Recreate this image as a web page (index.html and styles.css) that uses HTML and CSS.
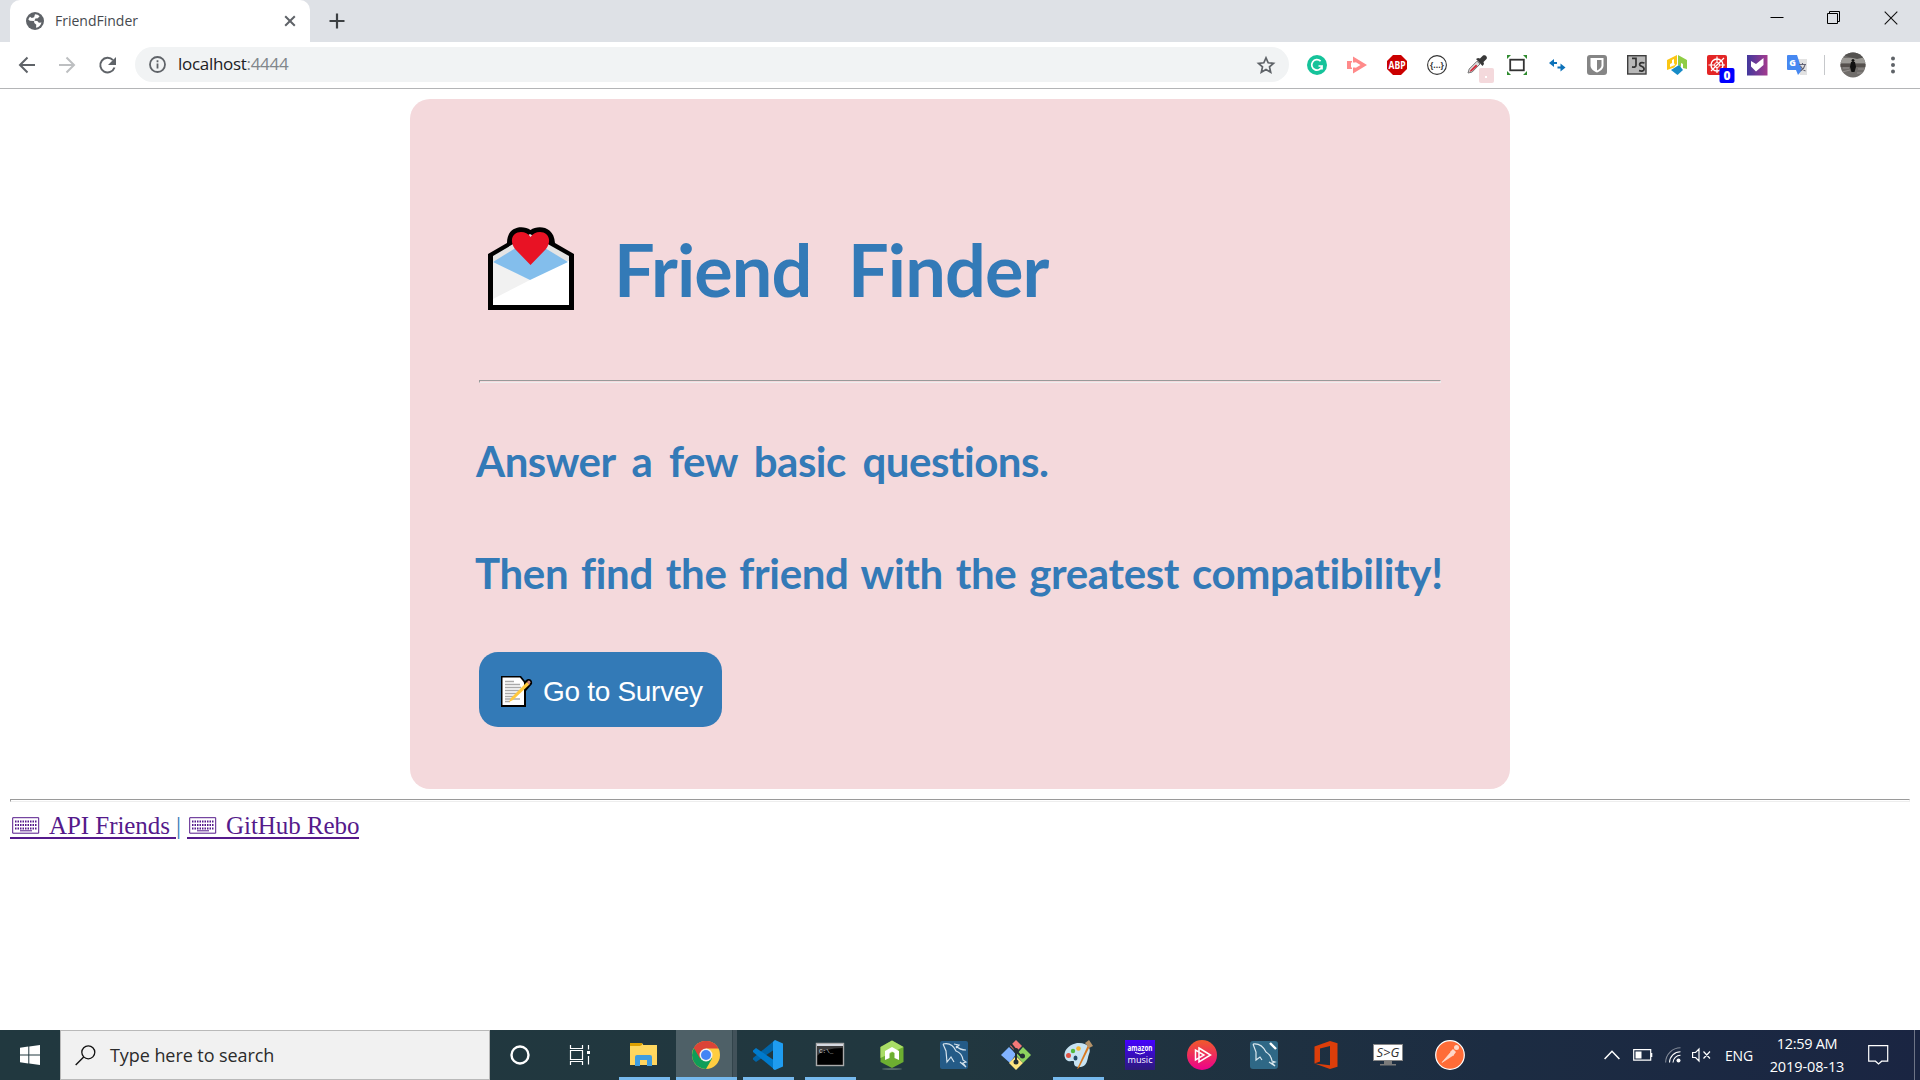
FILE: index.html
```html
<!DOCTYPE html>
<html lang="en">
<head>
<meta charset="utf-8">
<title>FriendFinder</title>
<link rel="stylesheet" href="styles.css">
</head>
<body>
<header class="tabstrip">
  <div class="tab">
    <svg width="18" height="18" viewBox="0 0 18 18"><circle cx="9" cy="9" r="9" fill="#5f6368"/><path d="M9 2.200c2 .1 3.500.8 4.600 2.100l-1.800 1.900-2.400.3-1 2.300 2.900.2 1.600 1.700 2.600-.3c-.5 2.600-2.700 4.900-5.500 5.300l.3-2.900-2-1.800-.2-1.900-4.300-.3-1.500-1.400c.5-1 1-2 1.700-2.700l1.800 1.300 2.300-.8z" fill="#fff"/></svg>
    <span class="tab-title">FriendFinder</span>
    <svg class="tab-close" width="12" height="12" viewBox="0 0 12 12"><path d="M1.200 1.200l9.600 9.600M10.800 1.200l-9.600 9.600" stroke="#5f6368" stroke-width="2"/></svg>
  </div>
  <svg class="new-tab" width="16" height="16" viewBox="0 0 16 16"><path d="M8 .5v15M.5 8h15" stroke="#3c4043" stroke-width="2.200"/></svg>
  <div class="win-controls">
    <svg width="14" height="14" viewBox="0 0 14 14"><path d="M.5 6.500h13" stroke="#000"/></svg>
    <svg width="14" height="14" viewBox="0 0 14 14"><path d="M.5 2.500h10v10h-10zM2.500 2.500v-2h10v10h-2" fill="none" stroke="#000"/></svg>
    <svg width="14" height="14" viewBox="0 0 14 14"><path d="M.7.7l12.600 12.600M13.300.7L.7 13.300" stroke="#111" stroke-width="1.100"/></svg>
  </div>
</header>

<nav class="toolbar">
  <svg class="nav-icon" width="40" height="40" viewBox="0 0 40 40"><path d="M28 20H14M20.500 12.500L13 20l7.500 7.500" fill="none" stroke="#5f6368" stroke-width="2"/></svg>
  <svg class="nav-icon" width="40" height="40" viewBox="0 0 40 40"><path d="M12 20h14M19.500 12.500L27 20l-7.500 7.500" fill="none" stroke="#bdbfc1" stroke-width="2"/></svg>
  <svg class="nav-icon" width="40" height="40" viewBox="0 0 40 40"><path d="M26 15.200A7.300 7.300 0 1 0 27.500 22.500" fill="none" stroke="#5f6368" stroke-width="2"/><path d="M29 12v8h-8z" fill="#5f6368"/></svg>
  <div class="omnibox">
    <svg width="17" height="17" viewBox="0 0 17 17"><circle cx="8.500" cy="8.500" r="7.500" fill="none" stroke="#5f6368" stroke-width="1.800"/><path d="M8.500 7.500v5M8.500 4.300v1.900" stroke="#5f6368" stroke-width="1.800"/></svg>
    <span class="url">localhost<span class="port">:4444</span></span>
    <svg class="star" width="20" height="20" viewBox="0 0 20 20"><path d="M10 2.800l2.200 5 5.300.5-4 3.600 1.200 5.300-4.700-2.800-4.700 2.800 1.200-5.300-4-3.600 5.300-.5z" fill="none" stroke="#5f6368" stroke-width="1.700"/></svg>
  </div>
  <div class="extensions">
    <svg viewBox="0 0 20 20"><circle cx="10" cy="10" r="10" fill="#15c39a"/><path d="M13.600 6.200A5.200 5.200 0 1 0 15 11h-3.500M15 11v3.500" fill="none" stroke="#fff" stroke-width="1.700"/></svg>
    <svg viewBox="0 0 20 20"><path d="M0 6h5v8H0zM6 1.500L20 10 6 18.500z" fill="#ff8a8a"/><path d="M8.500 7l5 3-5 3zM4 7.500h5v5H4z" fill="#fff"/></svg>
    <svg viewBox="0 0 20 20"><path d="M6 0h8l6 6v8l-6 6H6l-6-6V6z" fill="#cb0000"/><text x="1.500" y="13.800" textLength="17" lengthAdjust="spacingAndGlyphs" font-family="Open Sans" font-weight="700" font-size="10.500" fill="#fff">ABP</text></svg>
    <svg viewBox="0 0 20 20"><circle cx="10" cy="10" r="9.400" fill="#fff" stroke="#333" stroke-width="1.100"/><text x="10" y="13" text-anchor="middle" font-family="Open Sans" font-weight="700" font-size="8.500" fill="#333">{...}</text></svg>
    <svg viewBox="0 0 20 20"><path d="M1 18l1.200-4L10 6.200 13 9l-7.800 8z" fill="#ddd" stroke="#777"/><path d="M2.500 17l1-2L9 9.500l1.500 1.500L5 16z" fill="#d22c3c"/><path d="M9 4l2-1 2 .5L16 .5c2-1.300 5 1.200 3.500 3.500L16.500 7l.5 2-1.500 2z" fill="#383838"/><rect x="12" y="13" width="15" height="15" rx="2" fill="#f4d9dc"/><rect x="18" y="21" width="2" height="2" fill="#fff"/></svg>
    <svg viewBox="0 0 20 20"><rect x="3.200" y="4.700" width="13.600" height="10.600" fill="#fff" stroke="#333" stroke-width="1.800"/><path d="M0 0h4L0 4zM16 0h4v4zM0 16v4h4zM20 16v4h-4z" fill="#2f8b2f"/></svg>
    <svg viewBox="0 0 20 20"><path d="M2 8l5-4v3h3v2H7v3zM18.500 12.500l-5-4v3h-3v2h3v3z" fill="#0d72b9"/></svg>
    <svg viewBox="0 0 20 20"><rect width="20" height="20" rx="3" fill="#858585"/><path d="M3.500 3h13v7.500c0 3.500-3 5.500-6.500 7-3.500-1.500-6.500-3.500-6.500-7z" fill="#fff"/><path d="M10 5h4.500v5.500c0 2.200-2 3.800-4.500 5z" fill="#858585"/></svg>
    <svg viewBox="0 0 20 20"><rect x=".7" y=".7" width="18.300" height="18.300" fill="#b8b8b8" stroke="#3e3e3e" stroke-width="1.400"/><path d="M5 3.300h4v7q0 2.400-4 1.500M17.500 8c-5-1.600-6.500 2-3 3.300s4 6-2.500 4.400" fill="none" stroke="#333" stroke-width="1.700"/></svg>
    <svg viewBox="0 0 20 20"><path d="M0 5l10-5v9l-3 3.500L0 15z" fill="#fbc614"/><path d="M11 0l9 5v9l-4-1V9l-2-1v4l-3-2z" fill="#8fcd45"/><path d="M4 15l8-5 4 5-5.500 5z" fill="#168bc7"/><path d="M3 12V9l2-1V5l2-1v4l1 2" fill="#fff"/></svg>
    <svg viewBox="0 0 20 20"><rect width="20" height="20" rx="2" fill="#e32525"/><circle cx="10" cy="10" r="6" fill="none" stroke="#fff" stroke-width="1.400"/><circle cx="10" cy="10" r="2.500" fill="none" stroke="#fff"/><path d="M10 1.500v6M1.500 10h6M17 3L4 16M12 10h6M10 12v6" stroke="#fff" stroke-width="1.200"/><rect x="12.500" y="13" width="15" height="15" rx="2" fill="#00f"/><text x="20" y="25" text-anchor="middle" font-family="Open Sans" font-weight="800" font-size="12" fill="#fff">0</text></svg>
    <svg viewBox="0 0 20 20"><defs><linearGradient id="pv"><stop offset="0" stop-color="#42389d"/><stop offset="1" stop-color="#a33a8e"/></linearGradient></defs><rect width="20.500" height="20.500" fill="url(#pv)"/><path d="M4 6l5 3 7.500-6v7L9 16.500l-5-5z" fill="#fff"/></svg>
    <svg viewBox="0 0 20 20"><path d="M8 4h12v16h-7z" fill="#e2e2e2"/><path d="M1 0h9l5 15H1q-1 0-1-1V1q0-1 1-1zM9 15h6l-4 5z" fill="#4688f1"/><text x="2.300" y="11" font-family="Open Sans" font-weight="800" font-size="9" fill="#fff">G</text><path d="M12 9.500h7M15.500 8v1.500M18 10q-1 4-4.500 6M13.500 11q2 4 5 5" fill="none" stroke="#667" stroke-width="1.100"/></svg>
  </div>
  <div class="divider"></div>
  <svg class="avatar" width="26" height="26" viewBox="0 0 26 26"><defs><clipPath id="av"><circle cx="13" cy="13" r="12.500"/></clipPath></defs><g clip-path="url(#av)"><rect width="26" height="26" fill="#706d6a"/><path d="M0 6h26v5H0z" fill="#9b9995"/><path d="M0 0h26v5L17 7 5 4 0 7z" fill="#545250"/><path d="M0 12h26v3H0z" fill="#55504d"/><path d="M2 20l8-2M17 21h8M3 16h6M18 17h6" stroke="#94908e"/><path d="M11 10h4l1 5-1.500 5h-3L10 15z" fill="#111"/><circle cx="13" cy="8.500" r="1.500" fill="#111"/></g></svg>
  <svg class="menu" width="6" height="18" viewBox="0 0 6 18"><g fill="#5f6368"><circle cx="3" cy="2.500" r="2"/><circle cx="3" cy="9" r="2"/><circle cx="3" cy="15.500" r="2"/></g></svg>
</nav>

<main class="page">
  <section class="card">
    <h1 class="title">
      <svg width="88" height="86" viewBox="0 0 88 86"><path d="M1 28L20 17C20 0 36-1 43.500 4 51-1 67 0 68 17l19 11v56H1z" fill="#000"/><path d="M6 30l37-22 39 22v49H6z" fill="#e4e4e4"/><path d="M6 35h76v44H6z" fill="#fff"/><path d="M6 35v38l37-19z" fill="#f1f1f1"/><path d="M6 36l37-23 38 23-38 18z" fill="#83beec"/><path d="M43.500 39L28 23C21 13 27 6 34 6q6 0 9.500 5Q47 6 53 6c7 0 13 7 6 17z" fill="#e81224"/></svg>
      <span>Friend Finder</span>
    </h1>
    <hr class="rule">
    <h2 class="lead lead-first">Answer a few basic questions.</h2>
    <h2 class="lead lead-second">Then find the friend with the greatest compatibility!</h2>
    <a class="survey-btn">
      <svg width="31" height="32" viewBox="0 0 31 32"><path d="M0 0h20l4 5c4-4 8-1 7 3l-6 7v16H0z" fill="#000"/><path d="M1.500 1.500h17.500l4 5v22.500H1.500z" fill="#fff"/><path d="M4 5.500h9M4 8.500h15M4 11.500h16M4 14.500h14M4 17.500h13M4 20.500h10M4 23h15M4 25.500h5" stroke="#aaa" stroke-width="1.300"/><path d="M8 26l2-4L26 6l2.500 2.500L12 24z" fill="#ffc83d"/><path d="M26 6l1.500-1.500q2 0 2 2L28 9z" fill="#d08b83"/></svg>
      <span>Go to Survey</span>
    </a>
  </section>
  <hr class="rule">
  <footer class="links">
    <a><svg width="28" height="17" viewBox="0 0 28 17"><path d="M.7.700h26v15.500H.7z" fill="none" stroke="#551a8b"/><path d="M3 4.500h22M3 8h22M3 11.500h22" stroke="#551a8b" stroke-width="2" stroke-dasharray="1.500 1"/><path d="M8 13.800h12" stroke="#551a8b"/></svg><span>API Friends </span></a><span class="bar">|</span><a><svg width="28" height="17" viewBox="0 0 28 17"><path d="M.7.700h26v15.500H.7z" fill="none" stroke="#551a8b"/><path d="M3 4.500h22M3 8h22M3 11.500h22" stroke="#551a8b" stroke-width="2" stroke-dasharray="1.500 1"/><path d="M8 13.800h12" stroke="#551a8b"/></svg><span>GitHub Rebo</span></a>
  </footer>
</main>

<footer class="taskbar">
  <div class="start"><svg width="20" height="20" viewBox="0 0 20 20"><path d="M0 2.800L8.300 1.500v8H0zM9.300 1.400L20 0v9.500H9.300zM0 10.500h8.300v8L0 17.300zM9.300 10.500H20V20L9.300 18.600z" fill="#fff"/></svg></div>
  <div class="search">
    <svg width="21" height="21" viewBox="0 0 21 21"><circle cx="13.300" cy="7.300" r="6.500" fill="none" stroke="#111" stroke-width="1.300"/><path d="M8.700 12L.7 20" stroke="#111" stroke-width="1.400"/></svg>
    <span>Type here to search</span>
  </div>
  <div class="sys"><svg viewBox="0 0 30 30"><circle cx="15" cy="15" r="8.500" fill="none" stroke="#fff" stroke-width="2.400"/></svg></div>
  <div class="sys"><svg viewBox="0 0 30 30"><path d="M5.500 5v3.500h12V5M5.500 25v-3.500h12V25M5.500 10.500h12v9h-12zM23.500 5v4.500M23.500 16v8.500" fill="none" stroke="#fff" stroke-width="1.200"/><rect x="22" y="11" width="3" height="3" fill="#fff"/></svg></div>
  <div class="apps">
    <div class="app open"><svg viewBox="0 0 30 30"><path d="M1 3h12l2 3h13v19H1z" fill="#ffd55e"/><path d="M1 3h12v3H1z" fill="#dda000"/><path d="M1 6h10l2-1h15v9H1z" fill="#ffd75f"/><path d="M6 26v-9q0-2 2-2h13q2 0 2 2v9h-5v-6h-7v6z" fill="#3f9de0"/></svg></div>
    <div class="app open active"><svg viewBox="0 0 30 30"><circle cx="15" cy="15" r="14" fill="#ffcd40"/><path d="M15 15L2.900 8A14 14 0 0 1 27.100 8H15z" fill="#db4437"/><path d="M2.900 8A14 14 0 0 0 15 29l6-10.500L15 15z" fill="#0f9d58"/><path d="M2.900 8l6 10.500L15 8.500H27.400A14 14 0 0 0 2.900 8z" fill="#db4437"/><circle cx="15" cy="15" r="6.500" fill="#f1f1f1"/><circle cx="15" cy="15" r="5" fill="#4285f4"/></svg></div>
    <div class="app open"><svg viewBox="0 0 30 30"><path d="M22 0v9L3 22 0 19.500V18z" fill="#0065a9"/><path d="M22 30v-9L3 8 0 10.500V12z" fill="#007acc"/><path d="M22 0l8 3.500v23L22 30l-2-1V2z" fill="#1f9cf0"/></svg></div>
    <div class="app open"><svg viewBox="0 0 30 30"><rect x="1.500" y="3.500" width="27" height="22" fill="#000" stroke="#aaa" stroke-width="1.400"/><path d="M2 4h26v2H2z" fill="#d5d9e0"/><path d="M2 6h26v2Q9 8 2 16z" fill="#3b3b3b"/><text x="4" y="12.500" font-family="Liberation Mono" font-size="6" fill="#ddd">C:\_</text></svg></div>
    <div class="app"><svg viewBox="0 0 30 30"><ellipse cx="15" cy="29" rx="10" ry="1" fill="#546969"/><path d="M15 .5L26.500 7v15L15 28 3.500 22V7z" fill="#6daf31"/><path d="M15 .5L26.500 7 3.500 18V7z" fill="#aadd67"/><path d="M8 20v-9l7-4 7 4v9l-4.500-2v-5L15 11.500 12.500 13v5z" fill="#fff"/></svg></div>
    <div class="app"><svg viewBox="0 0 30 30"><rect x="1" y="1" width="28" height="28" rx="2" fill="#245b87"/><path d="M4 4q9-2 13 7 6 2 7 9l3 2-3 1 3 4-6-5M4 4l3 7 1 11 4-5 3 5M15 4l5 1-3 3M17 6q4 4 10 4" fill="none" stroke="#d5e3ec" stroke-width="1.200"/></svg></div>
    <div class="app"><svg viewBox="0 0 30 30"><path d="M15 0l6 6-6 6-6-6z" fill="#f57878"/><path d="M8 7l7 7-6 9-9-8z" fill="#80b3ff"/><path d="M22 7l8 8-8 8-7-8z" fill="#8dd35f"/><path d="M15 16l7 7-7 7-7-7z" fill="#ffe680"/><path d="M10 4l5 6v14M15 11l6 6" fill="none" stroke="#222f35" stroke-width="2"/><g fill="#222f35"><circle cx="15" cy="10.500" r="2.500"/><circle cx="15" cy="22" r="2.500"/><circle cx="21.500" cy="16" r="2.500"/></g></svg></div>
    <div class="app open"><svg viewBox="0 0 30 30"><path d="M14 3C24 2 29 8 26 14c-2 5-1 13-10 13-5 0-5-3-5-5s-3 0-6-1C-1 18 0 6 14 3z" fill="#c7e3f2"/><ellipse cx="12.500" cy="18" rx="2" ry="2.500" fill="#244b68"/><circle cx="5.500" cy="15.500" r="2.500" fill="#e05243"/><circle cx="10" cy="11" r="2.200" fill="#51b93d"/><circle cx="15.500" cy="8.500" r="2.300" fill="#f4b530"/><path d="M14 29L25 5l2 1-11 22z" fill="#d87920"/><path d="M22 3l4-3 4 6-4 2z" fill="#b69369"/></svg></div>
    <div class="app"><svg viewBox="0 0 30 30"><defs><linearGradient id="am" x2="0" y2="1"><stop stop-color="#4500ff"/><stop offset="1" stop-color="#2c1b79"/></linearGradient></defs><rect width="30" height="30" fill="url(#am)"/><g font-family="Open Sans" fill="#fff"><text x="2.500" y="11" font-size="8" font-weight="700" textLength="25" lengthAdjust="spacingAndGlyphs">amazon</text><text x="2.500" y="22.500" font-size="9" textLength="25" lengthAdjust="spacingAndGlyphs">music</text></g><path d="M10 12.500q5 3 10 0" fill="none" stroke="#fff"/></svg></div>
    <div class="app"><svg viewBox="0 0 30 30"><defs><linearGradient id="ps" x2="0" y2="1"><stop stop-color="#f15b2a"/><stop offset="1" stop-color="#ec008c"/></linearGradient></defs><circle cx="15" cy="15" r="15" fill="url(#ps)"/><path d="M12 8l11.500 7L12 22zM8.500 10v10l8.500-5z" fill="none" stroke="#fff" stroke-width="1.500"/></svg></div>
    <div class="app"><svg viewBox="0 0 30 30"><rect x="1" y="1" width="28" height="28" rx="3" fill="#2f6886"/><path d="M4 4c7-1 11 4 13 8q5 3 6 9l3 1-3 1 3 3-6-4M4 4l3 8v8l4-3 2 3" fill="none" stroke="#dce9ef" stroke-width="1.200"/><path d="M21 3l6 6" stroke="#fff" stroke-width="2.400"/></svg></div>
    <div class="app"><svg viewBox="0 0 30 30"><path d="M3.500 6.500L19 1l7.500 2.300v23.500L19 29 3.500 23.500 19 25.200V6L9 8.500v13l-5.500 2z" fill="#dc3e0a"/></svg></div>
    <div class="app"><svg viewBox="0 0 30 30"><rect x=".5" y="4.500" width="29" height="16" fill="#fff" stroke="#888"/><path d="M11 21h8v3h4v1.500H7V24h4z" fill="#7a7a7a"/><text x="3.500" y="17" font-family="Open Sans" font-style="italic" font-size="12.500" textLength="23" lengthAdjust="spacingAndGlyphs" fill="#333">S&gt;G</text></svg></div>
    <div class="app"><svg viewBox="0 0 30 30"><circle cx="15" cy="15" r="14.300" fill="#ff6c37" stroke="#fff" stroke-width="1.200"/><path d="M7 22.500l8.500-10 3 2.500z" fill="#ffd8c8" stroke="#ffe6dc" stroke-width=".6"/><path d="M15 12l3-3 3 3-3 4z" fill="#ffd8c8"/><circle cx="21.500" cy="7.500" r="2.500" fill="#ffd8c8"/></svg></div>
  </div>
  <div class="tray">
    <svg width="16" height="10" viewBox="0 0 16 10"><path d="M.6 9L8 1.300 15.400 9" fill="none" stroke="#fff" stroke-width="1.500"/></svg>
    <svg class="battery" width="20" height="12" viewBox="0 0 20 12"><path d="M.7.700h17v10.500H.7z" fill="none" stroke="#fff" stroke-width="1.200"/><path d="M18 4h1.300v4H18M2.500 2.500h6v7h-6z" fill="#fff"/></svg>
    <svg class="wifi" width="16" height="16" viewBox="0 0 16 16"><g fill="none" stroke="#fff" stroke-width="1.100"><path d="M.6 15.500A15 15 0 0 1 15.500.8" opacity=".45"/><path d="M4.500 15.500A11 11 0 0 1 15.500 4.700"/><path d="M8 15.500a7.500 7.500 0 0 1 7.500-7.200"/></g><circle cx="13.500" cy="13.500" r="2" fill="#fff"/></svg>
    <svg class="sound" width="19" height="14" viewBox="0 0 19 14"><path d="M.6 4.500h3L7 1v12L3.600 9.500h-3zM11.500 3.500l6.500 7M18 3.500l-6.500 7" fill="none" stroke="#fff" stroke-width="1.200"/></svg>
    <span class="lang">ENG</span>
    <div class="clock"><span>12:59 AM</span><span class="date">2019-08-13</span></div>
    <svg class="notice" width="21" height="20" viewBox="0 0 21 20"><path d="M.7.700h19v15.500h-6L10.500 19l-3-2.800H.7z" fill="none" stroke="#fff" stroke-width="1.200"/></svg>
    <div class="peek"></div>
  </div>
</footer>
</body>
</html>
```
FILE: styles.css
```css
* { box-sizing: border-box; }
body {
  margin: 0;
  width: 1920px;
  height: 1080px;
  overflow: hidden;
  display: flex;
  flex-direction: column;
  background: #fff;
  font-family: "Open Sans", sans-serif;
}
svg { display: block; flex: none; overflow: visible; }

.tabstrip {
  height: 42px;
  flex: none;
  display: flex;
  align-items: flex-start;
  padding-left: 10px;
  background: #dee1e6;
}
.tab {
  width: 300px;
  height: 42px;
  padding: 0 14px 1px 16px;
  display: flex;
  align-items: center;
  background: #fff;
  border-radius: 10px 10px 0 0;
}
.tab-title { margin-left: 11px; font-size: 14px; color: #45494d; }
.tab-close { margin-left: auto; }
.new-tab { margin: 13px 0 0 19px; }
.win-controls { margin: 11px 22px 0 auto; display: flex; gap: 43px; }

.toolbar {
  height: 47px;
  flex: none;
  display: flex;
  align-items: center;
  padding: 0 0 1px 7px;
  border-bottom: 1px solid #b4b5b7;
}
.omnibox {
  margin-left: 8px;
  width: 1154px;
  height: 35px;
  padding: 0 13px 0 14px;
  display: flex;
  align-items: center;
  border-radius: 18px;
  background: #f1f3f4;
}
.url { margin: -2px 0 0 12px; font-size: 17px; letter-spacing: -0.3px; color: #202124; }
.port { color: #80868b; }
.star { margin-left: auto; }
.extensions { margin-left: 18px; display: flex; gap: 20px; }
.extensions svg { width: 20px; height: 20px; }
.divider { margin-left: 17px; width: 1px; height: 20px; background: #c6c8cb; }
.avatar { margin-left: 15px; }
.menu { margin-left: 24px; }

.page { flex: 1; padding: 10px 10px 0; }
.card {
  width: 1100px;
  height: 690px;
  margin: 0 auto;
  padding: 127px 69px 0 69px;
  border-radius: 20px;
  background: #f4d9dc;
  color: #337ab7;
}
.title {
  height: 154px;
  margin: 0;
  padding-left: 8px;
  display: flex;
  gap: 39px;
  font: 700 72px/86px Lato, cursive;
  white-space: nowrap;
}
.title span { letter-spacing: -0.9px; word-spacing: 20px; }
.rule { margin: 0; border: 1px inset #eee; height: 3px; }
.lead {
  margin: 0;
  font: 700 42px/60px Lato, cursive;
  white-space: nowrap;
}
.lead-first { margin: 48px 0 0 -3px; letter-spacing: -0.5px; word-spacing: 7px; }
.lead-second { margin: 52px 0 0 -4px; letter-spacing: -0.35px; word-spacing: 3px; }
.survey-btn {
  width: 243px;
  height: 75px;
  margin-top: 49px;
  padding: 5px 0 0 22px;
  display: flex;
  align-items: center;
  gap: 11px;
  border-radius: 19px;
  background: #337ab7;
  color: #fff;
  font: 28px "Liberation Sans", sans-serif;
  letter-spacing: -0.3px;
  white-space: nowrap;
}
.page > .rule { margin-top: 10px; }
.links {
  margin-top: 10px;
  display: flex;
  font: 25px/28px "Liberation Serif", serif;
  letter-spacing: -0.06px;
  color: #337ab7;
}
.links a {
  height: 27px;
  padding-left: 2px;
  display: flex;
  border-bottom: 2px solid #551a8b;
  color: #551a8b;
}
.links svg { margin-top: 5px; }
.links a span { margin-left: 9px; white-space: pre; }
.bar { width: 11px; text-align: left; }

.taskbar {
  height: 50px;
  flex: none;
  display: flex;
  background: linear-gradient(90deg, #21383f 0%, #21373f 50%, #1c2c42 78%, #1a2542 100%);
  color: #fff;
}
.start { width: 60px; display: grid; place-items: center; }
.search {
  width: 430px;
  padding-left: 14px;
  display: flex;
  align-items: center;
  gap: 14px;
  border: 1px solid #b9b9b9;
  background: #f1f1f1;
  color: #2b2b2b;
  font-size: 18px;
  letter-spacing: -0.07px;
}
.sys { width: 60px; display: grid; place-items: center; }
.sys svg, .app svg { width: 30px; height: 30px; }
.apps { margin-left: 3px; display: flex; }
.app { width: 62px; display: grid; place-items: center; background: no-repeat center bottom / 51px 3px; }
.open { background-image: linear-gradient(#76b9ed, #76b9ed); }
.active {
  background-image: linear-gradient(#76b9ed, #76b9ed), linear-gradient(90deg, #4e6067 56px, #32444b 56px, #32444b 57px, #42525a 57px);
  background-size: 61px 3px, 61px 100%;
  background-position: 1px bottom, 1px 0;
}
.tray { flex: 1; display: flex; align-items: center; padding-left: 123px; }
.battery { margin-left: 13px; }
.wifi { margin-left: 12px; }
.sound { margin-left: 11px; }
.lang { width: 30px; margin-left: 14px; font-size: 14px; letter-spacing: -0.2px; }
.clock {
  width: 84px;
  margin-left: 10px;
  display: flex;
  flex-direction: column;
  align-items: center;
  gap: 3px;
  font-size: 14.500px;
  line-height: 20px;
  letter-spacing: -0.3px;
  white-space: nowrap;
}
.date { letter-spacing: -0.1px; }
.notice { margin-left: 19px; }
.peek { width: 1px; height: 50px; margin-left: 25px; background: #6d7486; }
```
